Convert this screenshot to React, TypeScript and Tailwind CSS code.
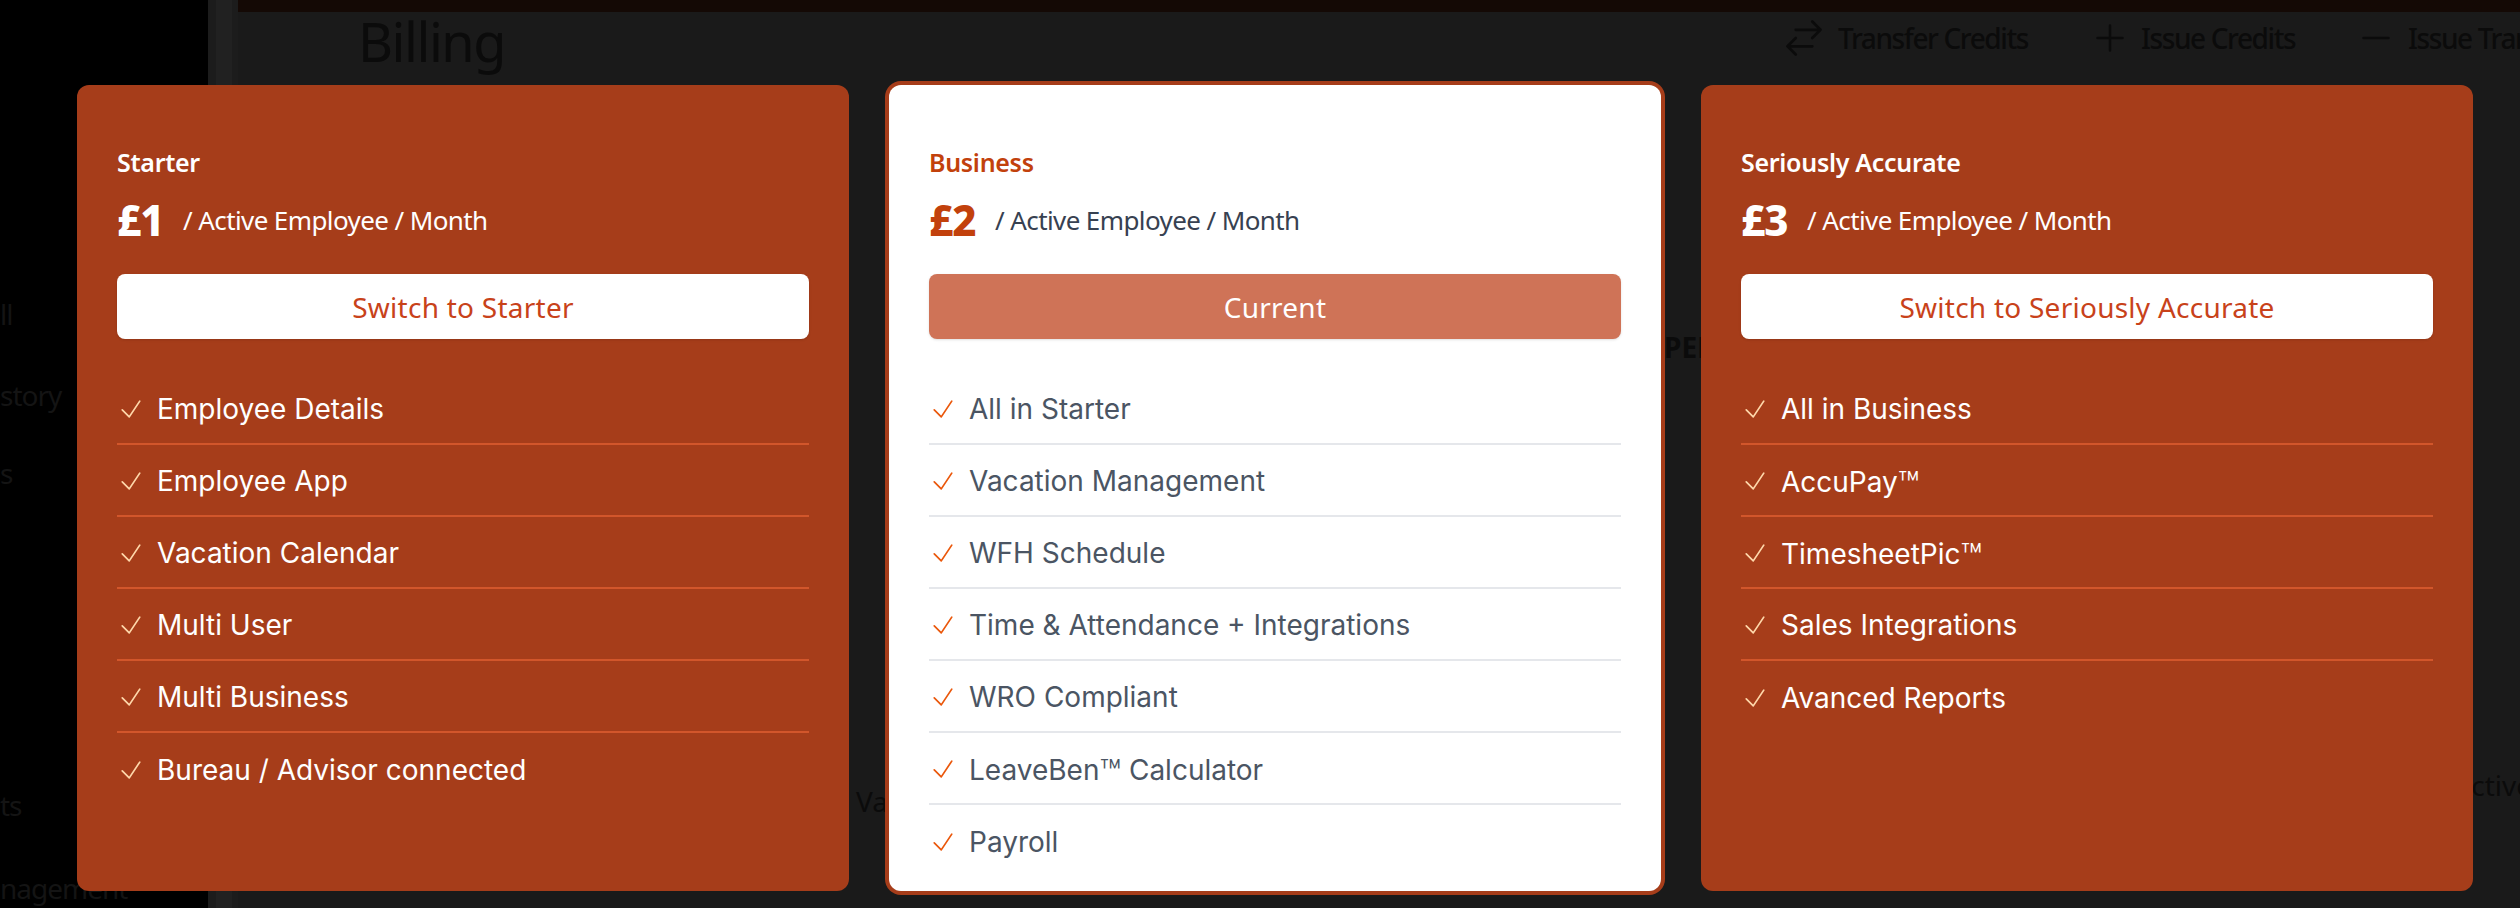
type Plan = {
  name: string;
  price: string;
  cta: string;
  features: string[];
  current?: boolean;
};

const plans: Plan[] = [
  {
    name: 'Starter',
    price: '£1',
    cta: 'Switch to Starter',
    features: ['Employee Details', 'Employee App', 'Vacation Calendar', 'Multi User', 'Multi Business', 'Bureau / Advisor connected'],
  },
  {
    name: 'Business',
    price: '£2',
    cta: 'Current',
    current: true,
    features: ['All in Starter', 'Vacation Management', 'WFH Schedule', 'Time & Attendance + Integrations', 'WRO Compliant', 'LeaveBen™ Calculator', 'Payroll'],
  },
  {
    name: 'Seriously Accurate',
    price: '£3',
    cta: 'Switch to Seriously Accurate',
    features: ['All in Business', 'AccuPay™', 'TimesheetPic™', 'Sales Integrations', 'Avanced Reports'],
  },
];

const headFont = "font-['Noto_Sans',sans-serif]";
const bodyFont = "font-['Inter',sans-serif]";

const CheckMark = ({ current }: { current?: boolean }) => (
  <svg
    viewBox="0 0 24 24"
    fill="none"
    strokeWidth={1.5}
    stroke="currentColor"
    className={`w-[28px] h-[28px] shrink-0 ${current ? 'text-[#ea580c]' : 'text-[#fed7aa]'}`}
  >
    <path strokeLinecap="round" strokeLinejoin="round" d="M4.5 12.75l6 6 9-13.5" />
  </svg>
);

const HeaderIcon = ({ d, className }: { d: string; className: string }) => (
  <svg viewBox="0 0 24 24" fill="none" strokeWidth={1.5} stroke="currentColor" className={`shrink-0 ${className}`}>
    <path strokeLinecap="round" strokeLinejoin="round" d={d} />
  </svg>
);

// the ™ runs wider in the reference than Inter's own glyph
const FeatureLabel = ({ text }: { text: string }) => {
  const [before, after] = text.split('™');
  if (after === undefined) return <>{text}</>;
  return (
    <>
      {before}
      <span className="relative top-[5px] text-[36px] font-light leading-none">™</span>
      {after}
    </>
  );
};

const PlanCard = ({ plan }: { plan: Plan }) => {
  const { current } = plan;
  return (
    <div
      className={`w-[772px] h-[806px] shrink-0 rounded-[12px] px-10 pt-[61px] ${
        current ? 'bg-white ring-4 ring-[#a63d1a]' : 'bg-[#a63d1a]'
      }`}
    >
      <div className={`${headFont} text-[25px] leading-[32px] font-semibold tracking-[-0.3px] ${current ? 'text-[#c2410c]' : 'text-white'}`}>
        {plan.name}
      </div>
      <div className={`${headFont} flex items-center h-[48px] mt-[18px]`}>
        <span className={`text-[42px] font-extrabold leading-[48px] w-[66px] tracking-[-1px] ${current ? 'text-[#c2410c]' : 'text-white'}`}>
          {plan.price}
        </span>
        <span className={`text-[26px] leading-[36px] tracking-[-0.6px] ${current ? 'text-[#374151]' : 'text-white'}`}>
          / Active Employee / Month
        </span>
      </div>
      <button
        className={`${headFont} mt-[30px] block w-full h-[65px] rounded-[8px] text-[28px] tracking-[0.25px] shadow-sm ${
          current ? 'bg-[#cf7357] text-white' : 'bg-white text-[#c8421a]'
        }`}
      >
        {plan.cta}
      </button>
      <ul className="mt-[34px]">
        {plan.features.map((feature, i) => (
          <li
            key={feature}
            className={`h-[72px] pt-[2px] flex items-center gap-3 ${
              i < plan.features.length - 1 ? `border-b-2 ${current ? 'border-[#e5e7eb]' : 'border-[#d2562b]'}` : ''
            }`}
          >
            <CheckMark current={current} />
            <span className={`${bodyFont} text-[28px] leading-[40px] ${current ? 'text-[#4b5563]' : 'text-white'}`}>
              <FeatureLabel text={feature} />
            </span>
          </li>
        ))}
      </ul>
    </div>
  );
};

export default function App() {
  return (
    <div className="relative w-screen h-screen overflow-hidden bg-[#1a1a1a]">
      {/* dimmed page behind the modal */}
      <div className={`${headFont} flex h-full text-[#0b0b0b] whitespace-nowrap`}>
        <div className="w-[208px] h-full shrink-0 bg-black text-[#141414] text-[28px] leading-[40px] tracking-[-1px]">
          <div className="mt-[294px]">ll</div>
          <div className="mt-[41px]">story</div>
          <div className="mt-[38px]">s</div>
          <div className="mt-[292px]">ts</div>
          <div className="mt-[43px]">nagement</div>
        </div>
        <div className="w-[8px] h-full shrink-0 bg-[#1c1c1c]" />
        <div className="w-[16px] h-full shrink-0 bg-[#212121]" />
        <div className="w-[6px] h-full shrink-0 bg-[#1c1c1c]" />
        <div className="flex-1 min-w-0">
          <div className="h-[12px] bg-[#140905]" />
          <div className="flex items-center h-[52px]">
            <div className="ml-[120px] mt-[5px] text-[54px] leading-[60px] tracking-[-1.5px]">Billing</div>
            <div className="ml-auto flex items-center w-[738px] shrink-0 text-[28px] font-medium tracking-[-1.4px]">
              <HeaderIcon
                className="w-[44px] h-[44px] mr-[12px]"
                d="M7.5 21L3 16.5m0 0L7.5 12M3 16.5h13.5m0-13.5L21 7.5m0 0L16.5 12M21 7.5H7.5"
              />
              <span className="w-[252px] shrink-0">Transfer Credits</span>
              <HeaderIcon className="w-[40px] h-[40px] mr-[11px]" d="M12 4.5v15m7.5-7.5h-15" />
              <span className="w-[215px] shrink-0">Issue Credits</span>
              <HeaderIcon className="w-[40px] h-[40px] mr-[12px]" d="M19.5 12h-15" />
              <span>Issue Transfer</span>
            </div>
          </div>
          <div className="mt-[263px] ml-[1426px] text-[28px] leading-[40px] font-bold">PENDING</div>
          <div className="mt-[401px] flex justify-between items-start text-[28px] leading-[40px]">
            <span className="ml-[618px] mt-[13px]">Va</span>
            <span className="-mr-[12px] -mt-[3px]">ctive</span>
          </div>
        </div>
      </div>

      {/* plan picker */}
      <div className="absolute inset-0 flex gap-10 pl-[77px] pt-[85px]">
        {plans.map((plan) => (
          <PlanCard key={plan.name} plan={plan} />
        ))}
      </div>
    </div>
  );
}
